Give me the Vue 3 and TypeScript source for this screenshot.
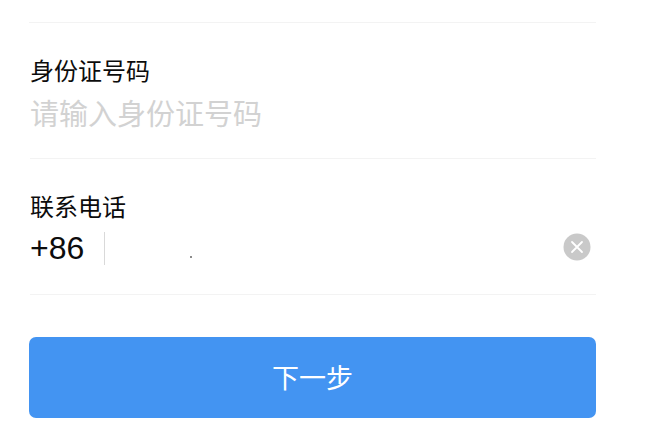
<script setup lang="ts">
const submitLabel: string = '下一步'
</script>

<template>
  <div class="page">
    <section class="field">
      <label class="label">身份证号码</label>
      <div class="placeholder">请输入身份证号码</div>
    </section>
    <section class="field">
      <label class="label">联系电话</label>
      <div class="phone">
        <span class="code">+86</span>
        <span class="sep"></span>
        <span class="value"><i class="dot"></i></span>
        <svg class="clear" viewBox="0 0 28 28" width="28" height="28">
          <circle cx="14" cy="14" r="13.5" fill="#c9c9c9" />
          <path d="M9 9l10 10M19 9L9 19" stroke="#fff" stroke-width="1.8" stroke-linecap="round" fill="none" />
        </svg>
      </div>
    </section>
    <button class="next" type="button">{{ submitLabel }}</button>
  </div>
</template>

<style scoped>
.page {
  width: 665px;
  height: 422px;
  overflow: hidden;
  box-sizing: border-box;
  padding: 22px 69px 0 29px;
  background: #fff;
  font-family: "Noto Sans CJK SC", "Liberation Sans", sans-serif;
  color: #0c0c0c;
}
.field {
  height: 136px;
  box-sizing: border-box;
  border-top: 1px solid #f3f3f3;
  padding: 29px 0 0 1px;
}
.field + .field {
  height: 137px;
  margin-left: 1px;
  padding-left: 0;
  border-bottom: 1px solid #f3f3f3;
}
.label {
  display: block;
  font-size: 24px;
  line-height: 36px;
}
.placeholder {
  font-size: 29px;
  line-height: 42px;
  margin-top: 3px;
  color: #d2d2d2;
}
.phone {
  display: flex;
  align-items: center;
  height: 34px;
  margin-top: 6px;
  padding-right: 5px;
}
.code {
  font-family: "Liberation Sans", sans-serif;
  font-size: 32px;
  line-height: 34px;
  width: 74px;
  padding-top: 1px;
}
.sep {
  width: 1px;
  height: 33px;
  margin-top: 3px;
  background: #d9d9d9;
}
.value {
  flex: 1;
  display: flex;
  padding: 26px 0 0 85px;
  box-sizing: border-box;
  height: 34px;
}
.dot {
  width: 1.5px;
  height: 1.5px;
  border-radius: 50%;
  background: #777;
}
.clear {
  flex: none;
}
.next {
  display: block;
  width: 567px;
  height: 81px;
  margin-top: 42px;
  border: 0;
  border-radius: 7px;
  background: #4394f2;
  color: #fff;
  font-family: inherit;
  font-size: 27px;
  font-weight: 400;
  padding: 0 0 2px;
}
</style>
